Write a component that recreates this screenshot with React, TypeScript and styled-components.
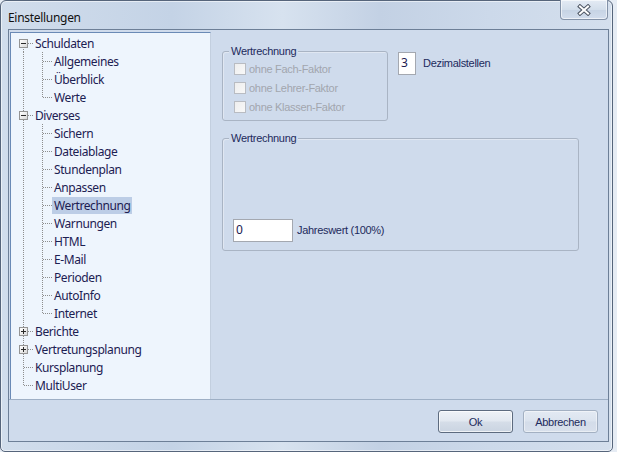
import React from 'react';
import styled, { createGlobalStyle, css } from 'styled-components';

const Global = createGlobalStyle`
  html, body { margin: 0; padding: 0; background: #e6ecf4; }
  body { width: 617px; height: 452px; overflow: hidden; }
  #root { width: 617px; height: 452px; }
  * { box-sizing: border-box; }
`;

const Window = styled.div`
  width: 613px;
  height: 452px;
  border: 1px solid #56657b;
  border-radius: 6px 6px 5px 5px;
  background: linear-gradient(90deg, #d1ddec 0%, #c4d3e6 28%, #d7e2ef 46%, #c3d1e4 62%, #ccd9ea 80%, #d4dfed 100%);
  box-shadow: inset 0 0 0 1px rgba(255, 255, 255, 0.55);
  display: flex;
  flex-direction: column;
  padding: 0 3px 9px 7px;
`;

const TitleBar = styled.div`
  height: 28px;
  display: flex;
  justify-content: space-between;
  align-items: flex-start;
`;

const Title = styled.div`
  font-family: 'Noto Sans', sans-serif;
  font-size: 12px;
  letter-spacing: -0.3px;
  color: #111;
  line-height: 18px;
  padding-top: 8px;
`;

const CloseButton = styled.div`
  width: 48px;
  height: 20px;
  margin-right: 1px;
  margin-top: -1px;
  border: 1px solid #8392a8;
  border-top: none;
  border-radius: 0 0 4px 4px;
  background: linear-gradient(#e4ebf4, #d3deeb 50%, #c6d3e4 51%, #d2dded);
  box-shadow: inset 0 0 0 1px rgba(255, 255, 255, 0.6);
  display: flex;
  align-items: center;
  justify-content: center;
`;

const Client = styled.div`
  height: 413px;
  border: 1px solid #6d7f97;
  background: #cfdbec;
  display: flex;
  flex-direction: column;
`;

const Main = styled.div`
  height: 370px;
  display: flex;
  border-bottom: 1px solid #9eafc5;
`;

const Tree = styled.div`
  width: 201px;
  margin: 2px 0 0 1px;
  background: #eef5fd;
  border-top: 1px solid #6a8ab6;
  border-left: 1px solid #6a8ab6;
  border-right: 1px solid #c3cfdf;
  padding-top: 1px;
  font-family: 'Noto Sans', sans-serif;
  font-size: 12px;
  letter-spacing: -0.4px;
  color: #1c2052;
`;

const Row = styled.div`
  position: relative;
  height: 18px;
  display: flex;
  align-items: center;
`;

const dotV = css`
  position: absolute;
  width: 1px;
  background-image: linear-gradient(to bottom, #8e8e8e 50%, transparent 50%);
  background-size: 1px 2px;
`;

const VLine = styled.span<{ $x: number; $kind: 'full' | 'top' | 'bottom' }>`
  ${dotV};
  left: ${(p) => p.$x}px;
  top: ${(p) => (p.$kind === 'bottom' ? 9 : 0)}px;
  height: ${(p) => (p.$kind === 'full' ? 18 : 9)}px;
`;

const HLine = styled.span<{ $x: number; $w: number }>`
  position: absolute;
  top: 9px;
  left: ${(p) => p.$x}px;
  width: ${(p) => p.$w}px;
  height: 1px;
  background-image: linear-gradient(to right, #8e8e8e 50%, transparent 50%);
  background-size: 2px 1px;
`;

const Expander = styled.span`
  position: absolute;
  left: 8px;
  top: 5px;
  width: 9px;
  height: 9px;
  border: 1px solid #949494;
  background: linear-gradient(135deg, #ffffff, #d9d9d9);
  display: flex;
  align-items: center;
  justify-content: center;
`;

const Label = styled.span<{ $level: number; $selected?: boolean }>`
  margin-left: ${(p) => (p.$level === 0 ? 22 : 41)}px;
  padding: 0 2px;
  line-height: 17px;
  height: 17px;
  white-space: nowrap;
  background: ${(p) => (p.$selected ? '#bccde6' : 'transparent')};
`;

const Panel = styled.div`
  flex: 1;
  padding: 21px 0 0 11px;
  font-family: 'Liberation Sans', Arial, sans-serif;
  font-size: 11px;
  letter-spacing: -0.3px;
  color: #1d2a5c;
`;

const TopRow = styled.div`
  display: flex;
  align-items: flex-start;
`;

const Group = styled.div<{ $w: number; $h: number }>`
  position: relative;
  width: ${(p) => p.$w}px;
  height: ${(p) => p.$h}px;
  border: 1px solid #a9b4c4;
  border-radius: 3px;
  box-shadow: inset 1px 1px 0 rgba(255, 255, 255, 0.35);
`;

const Legend = styled.span`
  position: absolute;
  top: -7px;
  left: 6px;
  padding: 0 2px;
  line-height: 13px;
  background: #cfdbec;
  color: #1d2a5c;
`;

const CheckList = styled.div`
  padding: 7px 0 0 11px;
  display: flex;
  flex-direction: column;
`;

const CheckRow = styled.div`
  height: 19px;
  display: flex;
  align-items: center;
  gap: 3px;
  color: #a2a6ae;
`;

const CheckBox = styled.span`
  width: 12px;
  height: 12px;
  border: 1px solid #b9bcc2;
  background: linear-gradient(135deg, #eeeeee, #f8f8f8);
`;

const Field = styled.div<{ $w: number }>`
  width: ${(p) => p.$w}px;
  height: 23px;
  background: #fff;
  border: 1px solid #a4a8b0;
  padding: 3px 0 0 2px;
  font-family: 'Noto Sans', sans-serif;
  font-size: 12px;
  line-height: 14px;
  color: #1c2052;
`;

const FieldLabel = styled.span<{ $gap: number }>`
  margin-left: ${(p) => p.$gap}px;
  line-height: 23px;
`;

const DecimalField = styled.div`
  display: flex;
  align-items: center;
  margin: 1px 0 0 10px;
`;

const Group2Body = styled.div`
  padding: 80px 0 0 10px;
  display: flex;
  align-items: center;
`;

const Spacer = styled.div`
  height: 17px;
`;

const ButtonBar = styled.div`
  flex: 1;
  display: flex;
  justify-content: flex-end;
  gap: 10px;
  padding: 10px 10px 0 0;
`;

const Button = styled.div<{ $default?: boolean }>`
  width: 75px;
  height: 23px;
  border-radius: 3px;
  display: flex;
  align-items: center;
  justify-content: center;
  font-family: 'Liberation Sans', Arial, sans-serif;
  font-size: 11px;
  letter-spacing: -0.3px;
  color: #1d2a5c;
  ${(p) =>
    p.$default
      ? css`
          border: 1px solid #5d6b7f;
          background: linear-gradient(#eef2f7, #e2e8f0 48%, #d5dde8 52%, #cad4e1);
          box-shadow: inset 0 0 0 1px rgba(255, 255, 255, 0.7);
        `
      : css`
          border: 1px solid #a3b0c2;
          background: linear-gradient(#e3eaf3, #dbe3ee 48%, #d3dce9 52%, #d8e0ec);
          box-shadow: inset 0 0 0 1px rgba(255, 255, 255, 0.45);
        `}
`;

type Item = { label: string; level: 0 | 1; exp?: '-' | '+'; selected?: boolean };

const items: Item[] = [
  { label: 'Schuldaten', level: 0, exp: '-' },
  { label: 'Allgemeines', level: 1 },
  { label: 'Überblick', level: 1 },
  { label: 'Werte', level: 1 },
  { label: 'Diverses', level: 0, exp: '-' },
  { label: 'Sichern', level: 1 },
  { label: 'Dateiablage', level: 1 },
  { label: 'Stundenplan', level: 1 },
  { label: 'Anpassen', level: 1 },
  { label: 'Wertrechnung', level: 1, selected: true },
  { label: 'Warnungen', level: 1 },
  { label: 'HTML', level: 1 },
  { label: 'E-Mail', level: 1 },
  { label: 'Perioden', level: 1 },
  { label: 'AutoInfo', level: 1 },
  { label: 'Internet', level: 1 },
  { label: 'Berichte', level: 0, exp: '+' },
  { label: 'Vertretungsplanung', level: 0, exp: '+' },
  { label: 'Kursplanung', level: 0 },
  { label: 'MultiUser', level: 0 },
];

const ExpIcon = ({ kind }: { kind: '-' | '+' }) => (
  <svg width="7" height="7" viewBox="0 0 7 7">
    <rect x="1" y="3" width="5" height="1" fill="#2a2a2a" />
    {kind === '+' && <rect x="3" y="1" width="1" height="5" fill="#2a2a2a" />}
  </svg>
);

const CloseGlyph = () => (
  <svg width="14" height="12" viewBox="0 0 14 12">
    <g strokeLinecap="square">
      <path d="M3 2.5 L11 9.5 M11 2.5 L3 9.5" stroke="#4d5563" strokeWidth="4" />
      <path d="M3 2.5 L11 9.5 M11 2.5 L3 9.5" stroke="#ffffff" strokeWidth="2" />
    </g>
  </svg>
);

const TreeRow = ({ item, index }: { item: Item; index: number }) => {
  const lastIndex = items.length - 1;
  let rootKind: 'full' | 'top' | 'bottom' = 'full';
  if (index === 0) rootKind = 'bottom';
  else if (index === lastIndex) rootKind = 'top';
  const next = items[index + 1];
  const isLastChild = item.level === 1 && (!next || next.level === 0);
  return (
    <Row>
      <VLine $x={12} $kind={rootKind} />
      {item.level === 0 ? (
        <HLine $x={item.exp ? 17 : 13} $w={item.exp ? 5 : 9} />
      ) : (
        <>
          <VLine $x={31} $kind={isLastChild ? 'top' : 'full'} />
          <HLine $x={32} $w={9} />
        </>
      )}
      {item.exp && (
        <Expander>
          <ExpIcon kind={item.exp} />
        </Expander>
      )}
      <Label $level={item.level} $selected={item.selected}>
        {item.label}
      </Label>
    </Row>
  );
};

export default function App() {
  return (
    <>
      <Global />
      <Window>
        <TitleBar>
          <Title>Einstellungen</Title>
          <CloseButton>
            <CloseGlyph />
          </CloseButton>
        </TitleBar>
        <Client>
          <Main>
            <Tree>
              {items.map((it, i) => (
                <TreeRow key={it.label} item={it} index={i} />
              ))}
            </Tree>
            <Panel>
              <TopRow>
                <Group $w={166} $h={70}>
                  <Legend>Wertrechnung</Legend>
                  <CheckList>
                    <CheckRow>
                      <CheckBox />
                      ohne Fach-Faktor
                    </CheckRow>
                    <CheckRow>
                      <CheckBox />
                      ohne Lehrer-Faktor
                    </CheckRow>
                    <CheckRow>
                      <CheckBox />
                      ohne Klassen-Faktor
                    </CheckRow>
                  </CheckList>
                </Group>
                <DecimalField>
                  <Field $w={18}>3</Field>
                  <FieldLabel $gap={7}>Dezimalstellen</FieldLabel>
                </DecimalField>
              </TopRow>
              <Spacer />
              <Group $w={357} $h={113}>
                <Legend>Wertrechnung</Legend>
                <Group2Body>
                  <Field $w={60}>0</Field>
                  <FieldLabel $gap={4}>Jahreswert (100%)</FieldLabel>
                </Group2Body>
              </Group>
            </Panel>
          </Main>
          <ButtonBar>
            <Button $default>Ok</Button>
            <Button>Abbrechen</Button>
          </ButtonBar>
        </Client>
      </Window>
    </>
  );
}
